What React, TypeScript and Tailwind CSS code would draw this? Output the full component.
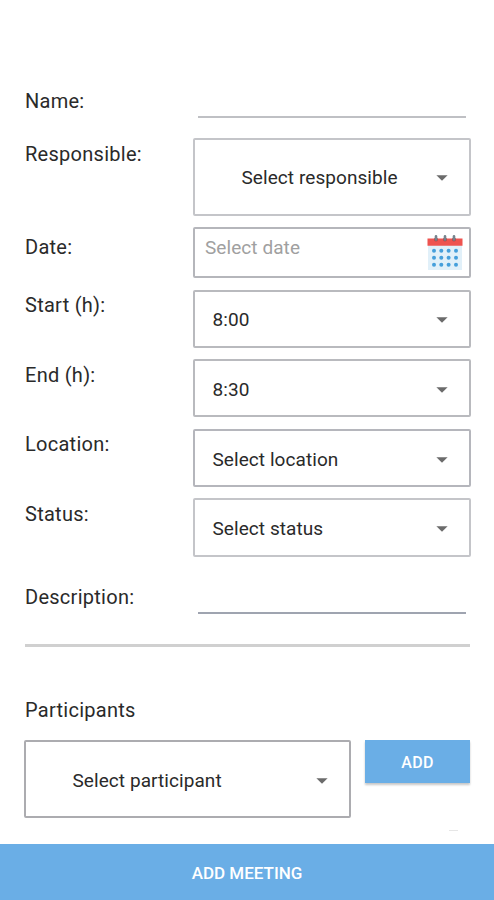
import type { ReactNode } from 'react'

function Caret() {
  return (
    <svg width="12" height="6" viewBox="0 0 12 6" aria-hidden className="shrink-0">
      <path d="M0.4 0.3h11.2L6 5.8z" fill="#6b6b6b" />
    </svg>
  )
}

function CalendarIcon() {
  return (
    <svg width="36" height="36" viewBox="0 0 36 36" aria-hidden className="shrink-0">
      <path d="M1 10h34v25H1z" fill="#e1f0f9" />
      <path d="M0.5 3.4h35v7.3h-35z" fill="#ee534f" />
      {[9, 18, 27].map((x) => (
        <g key={x}>
          <circle cx={x} cy="4.6" r="2" fill="#a9494e" />
          <path d={`M${x} 1.4v3`} stroke="#76838d" strokeWidth="2.6" strokeLinecap="round" />
        </g>
      ))}
      {[15.8, 22.8, 29.8].map((y) =>
        [7, 14.3, 21.6, 29].map((x) => <circle key={`${x}-${y}`} cx={x} cy={y} r="2" fill="#459fdb" />),
      )}
    </svg>
  )
}

function Label({ children, className = '' }: { children: ReactNode; className?: string }) {
  return (
    <span className={`w-[168px] shrink-0 text-[20px] leading-6 tracking-[0.27px] whitespace-nowrap ${className}`}>
      {children}
    </span>
  )
}

function Select({ value, className = '' }: { value: string; className?: string }) {
  return (
    <button
      type="button"
      className={`flex items-center justify-between rounded-[2px] border-2 pt-[2px] pr-[21px] text-left text-[19px] leading-6 tracking-[0.07px] whitespace-nowrap ${className}`}
    >
      {value}
      <Caret />
    </button>
  )
}

export default function App() {
  return (
    <main className="flex h-[900px] w-[494px] flex-col overflow-hidden bg-white font-['Roboto',sans-serif] text-[#2a2a2a]">
      <form className="flex flex-col pr-[23px] pl-[25px]">
        <div className="mt-[88px] flex h-[30px]">
          <Label className="pt-px">Name:</Label>
          <div className="mr-[5px] ml-[5px] flex-1 border-b-2 border-[#bfc0c4]" />
        </div>

        <div className="mt-5 flex h-[78px]">
          <Label className="pt-1">Responsible:</Label>
          <Select value="Select responsible" className="h-full flex-1 border-[#c4c5c9] pl-[46.5px]" />
        </div>

        <div className="mt-[11px] flex h-[51px]">
          <Label className="pt-2">Date:</Label>
          <div className="flex flex-1 justify-between rounded-[2px] border-2 border-[#b5b6bb] pr-[6px] pl-[10px]">
            <span className="pt-[7px] text-[19px] leading-6 tracking-[0.07px] text-[#a0a0a0]">Select date</span>
            <span className="pt-[6px]">
              <CalendarIcon />
            </span>
          </div>
        </div>

        <div className="mt-3 flex h-[58px]">
          <Label className="pt-[3px]">Start (h):</Label>
          <Select value="8:00" className="h-full flex-1 border-[#b9babe] pl-[17.5px]" />
        </div>

        <div className="mt-[11px] flex h-[58px]">
          <Label className="pt-1">End (h):</Label>
          <Select value="8:30" className="h-full flex-1 border-[#b9babe] pt-[3px] pl-[17.5px]" />
        </div>

        <div className="mt-3 flex h-[58px]">
          <Label className="pt-[3px]">Location:</Label>
          <Select value="Select location" className="h-full flex-1 border-[#b5b6bc] pt-[3px] pl-[17.5px]" />
        </div>

        <div className="mt-[11px] flex h-[59px]">
          <Label className="pt-1">Status:</Label>
          <Select value="Select status" className="h-full flex-1 border-[#c4c5c9] pl-[17.5px]" />
        </div>

        <div className="mt-7 flex h-[29px]">
          <Label>Description:</Label>
          <div className="mr-[5px] ml-[5px] flex-1 border-b-2 border-[#9fa4b0]" />
        </div>

        <hr className="mt-[30px] mr-px h-[3px] border-0 bg-[#d0d0d0]" />

        <h2 className="mt-[51px] text-[20px] leading-6 tracking-[0.27px]">Participants</h2>

        <div className="mt-[18px] mr-px -ml-px flex items-start gap-[14px]">
          <Select value="Select participant" className="h-[78px] w-[327px] border-[#acacb0] pt-[3px] pl-[46.5px]" />
          <button
            type="button"
            className="h-[43px] flex-1 bg-[#6aaee6] pt-[2px] text-[16px] font-medium tracking-[0.3px] text-white shadow-[0_2px_2px_rgba(0,0,0,0.22)]"
          >
            ADD
          </button>
        </div>
        <div className="mt-[12px] mr-[13px] h-px w-[9px] self-end bg-[#e6e6e6]" />
      </form>

      <button type="button" className="mt-auto h-14 w-full bg-[#6aaee6] pt-[3px] text-[17px] font-medium text-white">
        ADD MEETING
      </button>
    </main>
  )
}
